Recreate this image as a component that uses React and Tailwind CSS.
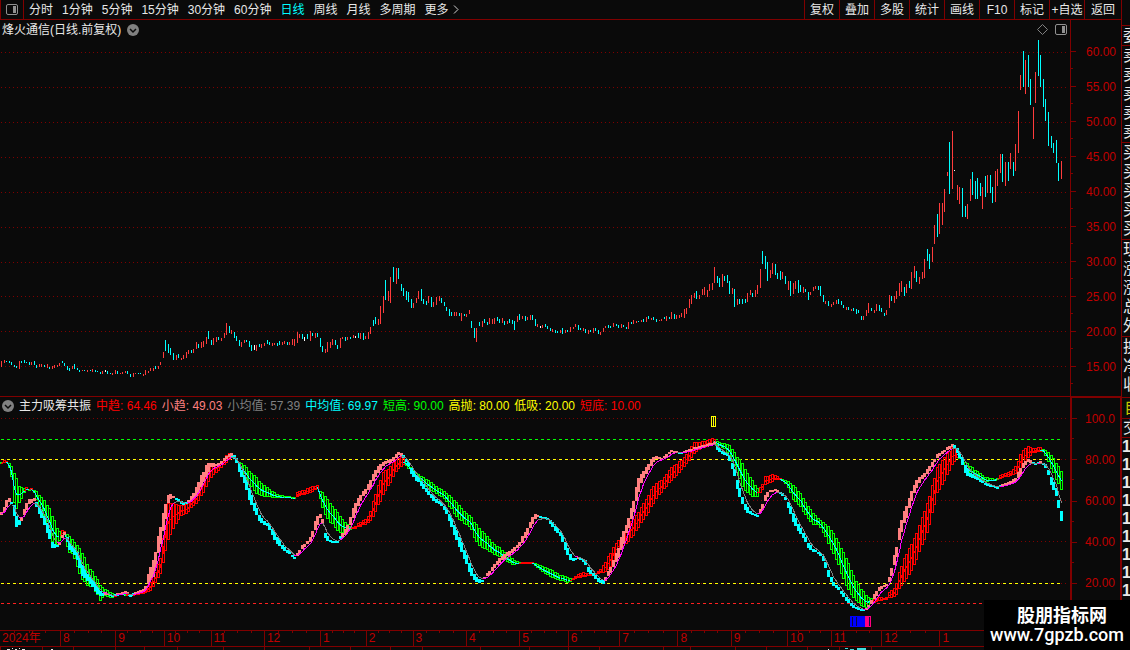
import React from 'react'

const STEP = 2.529

// each bar: colour letter (r up, c down, w flat), then top-bottom
const PRICE_BARS = [
  {
    from: 0,
    bars: `r361-367 r360-363 c361-362 c361-363 c362-365 c365-367 c366-368 r361-369 c361-363 c360-363
      c362-363 c362-365 r362-365 c361-365 c365-368 r364-367 r364-367 c365-367 r364-368 c367-369
      r366-369 r365-368 r365-367 r363-366 c361-363 c363-366 c366-370 c368-371 r366-369 c364-369
      c368-370 c370-372 r370-371 c370-371 r370-372 c370-371 r369-372 c370-372 c371-372 c372-374
      r371-374 w370-372 c371-374 c373-374 r373-375 r370-374 c371-374 r373-374 r372-374 r371-373
      c371-374 c374-377 r373-377 r373-374 c373-374 c373-374 r374-376 r370-375 r371-373 r368-371
      r368-371 c366-369 r366-369 r362-365 r352-358 c340-351 c344-353 c348-355 c353-360 r355-360
      c354-358 r358-360 r355-359 r352-358 r350-354 c350-353 r349-353 r342-349 c344-348 r342-348
      r341-347 r337-344 c331-339 c340-345 r338-345 r337-342 c337-340 r338-341 r333-338 r323-335
      c326-333 r330-334 c332-338 c336-341 c340-346 r342-347 r340-343 c340-342 c341-347 c345-351
      w345-350 r345-351 c344-347 r344-348 r343-346 c340-344 c342-345 r343-346 r343-345 c343-346
      c341-345 r342-345 r341-344 c342-345 r342-345 r339-345 r339-346 r332-343 r334-338 c334-339
      w337-341 c334-339 r331-341 c333-336 r333-338 c333-337 c338-347 c346-352 r349-353 r342-352
      r342-348 r339-345 c340-345 c345-349 r338-348 r337-339 c337-341 r337-340 c337-339 r335-338
      w336-338 c333-338 r333-339 c333-340 r336-339 r332-339 r327-334 c320-326 c317-324 r319-325`,
  },
  {
    from: 150,
    bars: `r306-324 r296-313 c280-300 r291-301 r277-303 c267-282 r268-284 c268-279 c284-291 c288-296
      c291-300 c292-302 c299-308 r303-308 r298-303 r291-299 c289-301 c299-304 c301-305 r296-303
      c297-307 r302-307 r297-305 r296-301 c298-303 c302-306 c307-311 c309-316 c312-316 r312-316
      r312-316 c313-316 r313-321 c314-316 r314-317 r310-314 c321-328 c328-338 r328-342 c322-326
      r321-327 c319-323 c322-325 r318-324 r319-324 r318-324 c317-321 c319-323 r318-323 c321-325
      r321-324 c319-323 c320-324 c321-330 r316-322 c314-320 r316-319 c316-321 r317-320 r315-320
      c315-320 c319-326 r324-327 w326-328 r325-328 c324-327 c326-329 c328-331 r329-332 c330-333
      c331-333 r330-333 c328-334 r330-333 c330-332 r327-332 r327-329 r324-327 c325-330 c328-330
      r328-331 c329-333 r330-334 c330-332 r328-333 c328-331 c330-334 r332-335 r328-332 r326-328
      c325-328 c326-328 r323-327 c324-326 c325-328 r324-328 c325-327 c327-329 r322-329 c322-324
      r320-324 r321-323 c321-322 r320-322 c319-322 r317-322 c316-319 r318-320 c317-320 c319-322
      r320-321 r319-321 c317-319 r316-321 c317-319 r312-319 c314-319 r315-319 r315-318 r313-317
      r309-318 r308-314 r299-308 r295-304 r293-298 c291-299 r295-299 r289-295 r287-295 r290-297
      r284-291 r283-290 r267-283 c276-283 c278-287`,
  },
  {
    from: 285,
    bars: `r274-287 c276-281 c275-283 c281-294 r288-294 c289-307 r299-305 c299-304 c299-304 c299-303
      r293-302 r290-295 c293-297 r290-297 r285-294 r269-288 c251-264 c256-269 c262-281 r270-278
      r263-274 c264-275 c273-279 c271-280 r272-279 c276-284 r281-290 c281-296 r283-294 r281-289
      c280-293 c285-292 r287-293 c289-292 c292-300 r292-295 r287-291 r286-289 c286-290 c286-296
      c295-302 r301-304 c301-306 r304-307 r302-305 r300-304 c299-304 c301-305 c305-308 r307-310
      c307-310 r309-311 c308-311 c309-314 c310-313 c316-320 r316-320 r310-316 r303-313 c308-311
      r310-313 r304-311 c305-311 c308-312 c313-316 r310-315 r295-308 c296-301 r296-303 r291-299
      r283-296 r281-292 c287-296 r284-293 c281-288 r272-289 r266-278 c271-282 r277-284 r272-279
      r259-278 c249-261 c254-269 r247-262`,
  },
  {
    from: 369,
    bars: `r225-244 c214-237 r203-234 r203-225 r189-212 r172-176 c142-194 r131-189 w170-171 r185-200
      r187-204 c188-217 c206-217 r204-219 r179-201 c172-195 c181-199 c178-199 c183-196 r187-209
      c176-197 r175-193 c175-193 c187-203 r171-202 r169-186 r154-173 c154-182 r162-186 c162-181
      r153-169 c162-176 r144-171 r111-153 r75-90 c51-87 r60-94 c55-87 c79-105 r107-139
      r72-103 c40-76 c55-87 c79-107 c99-121 c112-146 c136-148 c143-153 c140-163 c163-181 r161-179`,
  },
]

// colour letter + x:top-bottom, values between two points are interpolated
const MID_TREND = `c0:463-464 r4:460-463 r7:461-462 g9:463-468 g12:467-482 g14:473-503 g17:481-512 g19:486-503
  g22:488-497 g24:488-493 r26:487-490 g29:489-490 r31:488-490 g34:490-493 g37:492-503 g40:496-508 g43:498-515
  g46:503-525 g49:508-533 g52:516-542 g55:522-546 g58:531-545 g60:531-537 r63:529-535 g65:533-535 g68:535-553
  g72:539-554 g76:544-563 g80:549-577 g84:557-582 g88:566-587 g92:571-587 g96:577-593 g100:585-601 g104:588-595
  g108:590-598 g112:593-598 r116:594-596 g122:593-595 r128:594-596 g131:594-596 r136:593-595 r142:590-594
  r147:586-593 r151:580-590 r155:572-583 r158:564-578 r161:555-572 r163:538-563 r166:503-545 r169:503-537
  r172:503-530 r176:504-524 r180:505-516 r184:505-515 r188:503-512 r192:498-507 r196:493-504 r200:482-497
  r204:472-492 r208:463-482 r212:463-476 r217:464-472 r222:461-467 r227:453-462 r231:453-458 g234:457-459
  g238:461-465 g242:463-473 g247:468-482 g251:473-487 g256:477-494 g261:483-496 g267:487-497 g273:492-498
  g280:495-498 g287:496-498 g294:497-499 r297:492-497 r303:490-495 r310:487-493 r317:485-489 g319:490-493
  g321:491-505 g324:495-513 g328:500-521 g333:507-525 g338:513-533 g342:519-533 g346:523-532 g350:526-530
  r354:527-529 r359:522-527 r364:520-525 r367:518-524 r371:508-520 r374:497-515 r377:487-507 r381:477-500
  r384:470-493 r387:470-487 r391:465-482 r394:460-475 r397:458-470 r401:457-467 r404:458-464 g407:462-467
  g410:466-473 g415:473-477 g422:476-482 g428:480-489 g435:485-493 g443:490-498 g450:496-508 g457:503-518
  g463:510-523 g470:516-528 g475:523-540 g480:529-548 g485:534-549 g493:543-554 g500:548-558 g507:555-562
  g513:559-565 g518:562-564 r523:562-563 r533:562-563 g536:563-567 g542:566-572 g550:569-577 g558:574-580
  g567:577-583 g570:578-582 r573:578-580 r577:574-578 r583:572-577 r590:574-576 r597:572-574 r602:567-573
  r607:558-572 r612:549-563 r617:541-553 r622:536-547 r627:527-543 r632:520-537 r637:514-530 r642:505-521
  r647:497-515 r652:487-505 r657:482-498 r663:479-490 r670:468-482 r677:463-475 r683:458-468 r688:452-462
  r693:442-455 r700:442-449 r707:440-447 r713:438-443 g718:442-445 g725:443-450 g730:446-458 g732:449-462
  g737:457-473 g742:463-487 g747:473-493 g752:480-497 g757:488-497 r761:486-492 r765:476-485 r773:474-481
  r779:477-479 g783:479-482 g788:481-488 g793:485-500 g800:493-507 g807:505-518 g812:512-525 g818:518-525
  g823:522-533 g830:528-548 g837:540-562 g842:550-577 g847:560-588 g852:573-597 g857:583-602 g862:590-607
  g866:595-608 g870:598-604 r873:599-603 r878:597-601 r885:598-600 r889:592-598 r895:587-597 r898:575-590
  r903:560-583 r908:550-577 r913:540-567 r917:530-557 r922:517-545 r927:503-533 r932:485-513 r937:467-493
  r942:460-485 r947:453-475 r952:447-465 r957:449-458 g960:453-460 g965:462-473 g972:467-476 g978:472-478
  g985:477-482 g992:478-481 g996:479-480 r999:475-479 r1005:473-477 r1012:470-476 r1017:464-473 r1021:451-467
  r1028:446-458 r1033:448-453 r1040:447-452 g1043:449-452 g1047:451-460 g1050:453-467 g1053:458-473
  g1057:465-482 g1062:472-492`

const SMALL_TREND = `p0:514-516 p4:507-512 p6:500-507 p9:498-502 c11:502-504 c14:505-516 c16:516-527 c19:520-525
  p22:516-519 p25:505-513 p27:500-507 p30:499-503 p34:498-501 c36:502-507 c40:508-516 c44:516-525 c47:523-533
  c50:532-542 c52:542-548 c56:546-548 p59:542-545 p61:537-540 p64:532-535 c66:534-538 c69:543-550 c73:547-553
  c77:552-560 c81:563-575 c85:572-579 c89:575-583 c94:583-590 c98:588-595 c102:593-596 p106:592-594 c110:594-596
  c113:595-597 p118:593-594 p126:591-593 c130:594-597 p137:591-593 p143:589-591 p146:585-590 p149:569-581
  p153:560-577 p156:548-562 p158:536-553 p161:522-540 p164:508-527 p166:499-510 p169:493-500 p172:495-497
  c175:497-499 c180:500-503 c184:503-505 p188:500-503 p192:495-500 p195:490-498 p198:482-493 p201:475-487
  p204:470-480 p207:463-475 p210:463-467 p217:464-466 p222:460-463 p227:455-458 p231:453-456 c234:455-459
  c237:460-465 c240:468-475 c244:475-483 c248:485-497 c251:495-505 c255:505-513 c258:513-520 c262:519-524
  c267:523-526 c271:527-533 c275:533-542 c280:542-547 c284:547-551 c290:552-555 c294:557-559 p298:551-555
  p302:545-549 p306:542-544 p310:537-542 p313:528-535 p316:518-528 p319:512-518 p321:516-518 c323:522-528
  c325:533-538 c328:538-543 c331:541-542 c337:541-543 p342:533-537 p346:527-534 p350:517-525 p354:505-516
  p357:499-508 p361:493-498 p365:489-494 p370:480-488 p375:470-477 p380:464-470 p385:461-464 p390:459-463
  p394:456-460 p398:452-455 p401:453-456 c404:456-459 c407:460-463 c410:466-472 c414:472-479 c419:479-483
  c424:485-490 c429:492-496 c434:497-502 c440:502-504 c445:507-512 c449:514-521 c453:522-532 c457:532-542
  c461:542-552 c465:552-561 c469:563-572 c473:572-579 c477:578-583 c482:580-582 p485:575-578 p490:570-574
  p495:563-567 p500:557-562 p506:553-557 p512:549-553 p517:545-548 p521:538-544 p526:530-537 p530:522-528
  p533:515-522 p536:514-517 c540:516-518 c547:518-520 c552:522-527 c556:527-532 c560:532-536 c563:537-545
  c566:545-553 c569:553-559 c573:558-561 p577:557-558 c581:558-559 c585:560-565 c588:567-572 c592:572-575
  c597:577-581 c602:582-585 p606:575-579 p610:567-573 p614:558-565 p618:548-558 p622:533-547 p626:525-533
  p629:515-525 p632:505-516 p635:492-505 p638:478-492 p642:473-480 p647:465-472 p652:458-464 p655:456-459
  p662:458-459 p667:453-456 p671:450-452 p677:451-452 c680:452-453 p684:451-453 p690:449-451 p695:447-449
  p703:445-447 p710:443-445 p714:442-444 c717:445-450 c721:450-453 c727:453-456 c730:458-463 c733:465-472
  c737:480-489 c739:488-497 c743:500-506 c747:507-513 c752:513-515 c757:515-517 p761:507-512 p763:500-505
  p766:492-499 p770:490-492 p775:489-491 c779:491-493 c784:495-498 c787:500-505 c791:508-517 c795:518-526
  c799:526-532 c803:533-538 c808:543-548 c813:549-552 c818:552-553 c822:553-558 c825:562-568 c828:570-577
  c833:582-586 c838:587-590 c843:593-597 c848:599-603 c853:605-608 c858:608-609 c864:609-611 p867:607-608
  p870:602-606 p874:594-599 p878:588-592 p883:585-587 p887:584-585 p890:573-580 p892:562-572 p895:552-562
  p897:542-552 p899:528-540 p902:516-528 p905:508-520 p908:503-513 p910:493-503 p914:485-493 p917:478-485
  p922:475-479 p927:469-474 p932:462-467 p935:457-460 p938:453-457 p943:451-453 p948:446-449 p952:444-447
  c955:445-450 c958:450-455 c962:457-465 c966:467-475 c970:473-477 c977:477-480 c982:481-483 c986:483-486
  c992:485-487 c997:487-488 p1002:484-486 p1008:482-485 p1015:478-482 p1019:470-477 p1023:463-468 p1027:458-462
  c1032:462-463 c1037:463-464 p1040:461-463 c1044:463-466 c1047:467-472 c1049:472-478 c1052:480-488
  c1056:488-496 c1059:506-514 c1062:514-524`

const COLORS = { r: '#ff3c3c', c: '#00ffff', w: '#ffffff' }

const candles = PRICE_BARS.flatMap(({ from, bars }) =>
  bars.trim().split(/\s+/).map((bar, i) => {
    const [top, bottom] = bar.slice(1).split('-').map(Number)
    return { x: Math.floor(1.5 + STEP * (from + i)), top, bottom, color: COLORS[bar[0]] }
  })
)

const expand = (text) => {
  const points = text.trim().split(/\s+/).map((item) => {
    const [x, range] = item.slice(1).split(':')
    const [top, bottom] = range.split('-').map(Number)
    return { kind: item[0], x: Number(x), top, bottom }
  })
  const out = []
  let k = 0
  for (let i = 0; i < 420; i++) {
    const x = Math.floor(1.5 + STEP * i)
    while (k < points.length - 2 && points[k + 1].x <= x) k++
    const a = points[k]
    const b = points[k + 1]
    const t = Math.min(1, (x - a.x) / (b.x - a.x))
    out.push({
      x,
      kind: t > 0.6 ? b.kind : a.kind,
      top: Math.round(a.top + (b.top - a.top) * t),
      bottom: Math.round(a.bottom + (b.bottom - a.bottom) * t),
    })
  }
  return out
}

const midBars = expand(MID_TREND)
const smallBars = expand(SMALL_TREND)

const midLine = midBars.map((b) => ({ x: b.x, y: (b.top + b.bottom) / 2, color: b.kind === 'r' ? '#ff0000' : '#00ffff' }))

let last = null
const smallLine = smallBars.map((b) => {
  const mid = (b.top + b.bottom) / 2
  last = last === null ? mid : last + (mid - last) * 0.42
  return { x: b.x, y: last, color: b.kind === 'p' ? '#ff00ff' : '#808080' }
})

const PERIODS = ['分时', '1分钟', '5分钟', '15分钟', '30分钟', '60分钟', '日线', '周线', '月线', '多周期']
const ACTIONS = ['复权', '叠加', '多股', '统计', '画线', 'F10', '标记', '+自选', '返回']
const PRICES = ['60.00', '55.00', '50.00', '45.00', '40.00', '35.00', '30.00', '25.00', '20.00', '15.00']
const LEVELS = ['100.0', '80.00', '60.00', '40.00', '20.00']

const LEGEND = [
  { label: '中趋', value: '64.46', color: 'text-[#ff0000]' },
  { label: '小趋', value: '49.03', color: 'text-[#ff8080]' },
  { label: '小均值', value: '57.39', color: 'text-[#808080]' },
  { label: '中均值', value: '69.97', color: 'text-[#00ffff]' },
  { label: '短高', value: '90.00', color: 'text-[#00ff00]' },
  { label: '高抛', value: '80.00', color: 'text-[#ffff00]' },
  { label: '低吸', value: '20.00', color: 'text-[#ffff00]' },
  { label: '短底', value: '10.00', color: 'text-[#ff0000]' },
]

const MONTHS = [
  ['2024年', 61], ['8', 55], ['9', 48], ['10', 46], ['11', 53], ['12', 56], ['1', 45], ['2', 46], ['3', 53], ['4', 53],
  ['5', 48], ['6', 51], ['7', 58], ['8', 53], ['9', 56], ['10', 43], ['11', 50], ['12', 58], ['1', 188],
]

const QUOTE_GROUPS = [
  ['委'],
  ['卖', '卖', '卖', '卖', '卖'],
  ['买', '买', '买', '买', '买'],
  ['现', '涨', '涨', '总', '外'],
  ['换', '净', '收'],
]

const ChevronBadge = () => (
  <svg width="12" height="12" viewBox="0 0 12 12">
    <circle cx="6" cy="6" r="6" fill="#808080" />
    <path d="M3 5l3 3 3-3" fill="none" stroke="#0a0a0a" strokeWidth="1.5" />
  </svg>
)

const PanelIcon = () => (
  <svg width="12" height="11" viewBox="0 0 12 11">
    <rect x="0.5" y="0.5" width="11" height="10" rx="1.5" fill="none" stroke="#909090" />
    <rect x="7" y="2" width="3" height="7" fill="#909090" />
  </svg>
)

const TopBar = () => (
  <header className="flex h-5 shrink-0 items-stretch justify-between border-b border-[#800000] text-xs text-[#e8e8e8]">
    <nav className="flex items-center gap-[9px] whitespace-nowrap">
      <button aria-label="切换面板" className="-mr-1 flex w-6 items-center justify-center self-stretch border-x border-[#800000]">
        <PanelIcon />
      </button>
      {PERIODS.map((name) => (
        <button key={name} className={name === '日线' ? 'text-[#00ffff]' : ''}>{name}</button>
      ))}
      <button className="flex items-center gap-1">
        更多
        <svg width="6" height="9" viewBox="0 0 6 9" fill="none" stroke="#d0d0d0"><path d="M1 0.5l4 4-4 4" /></svg>
      </button>
    </nav>
    <div className="flex whitespace-nowrap">
      {ACTIONS.map((name) => (
        <button key={name} className="w-[35px] border-l border-[#800000] last:w-[37px]">{name}</button>
      ))}
    </div>
  </header>
)

const AxisRows = ({ labels }) => labels.map((label) => (
  <div key={label} className="flex flex-1 flex-col">
    <div className="flex flex-1 items-center">
      <span className="h-px w-[5px] bg-[#800000]" />
      <span className="flex-1 pr-[5px] text-right leading-none">{label}</span>
    </div>
    <span className="-mt-px h-px w-0.5 bg-[#800000]" />
  </div>
))

const GridLine = ({ y }) => (
  <line x1="1" x2="1066" y1={y + 0.5} y2={y + 0.5} stroke="#800000" strokeDasharray="1 3" />
)

const PriceChart = () => (
  <svg viewBox="0 39 1070 357" preserveAspectRatio="none" shapeRendering="crispEdges" className="min-h-0 w-full flex-1">
    {[52, 87, 122, 157, 192, 227, 262, 296, 331, 366].map((y) => <GridLine key={y} y={y} />)}
    {candles.map((c) => (
      <rect key={c.x} x={c.x} y={c.top} width="1" height={c.bottom - c.top} fill={c.color} />
    ))}
  </svg>
)

const Segments = ({ points }) => points.slice(1).map((p, i) => (
  <line key={p.x} x1={points[i].x + 0.5} y1={points[i].y + 0.5} x2={p.x + 0.5} y2={p.y + 0.5} stroke={p.color} />
))

const TrendChart = () => (
  <svg viewBox="0 414 1070 216" preserveAspectRatio="none" shapeRendering="crispEdges" className="min-h-0 w-full flex-1">
    {[418, 459, 500, 541, 583].map((y) => <GridLine key={y} y={y} />)}
    {[[439, '#00ff00'], [459, '#ffff00'], [583, '#ffff00'], [603, '#ff2020']].map(([y, color]) => (
      <line key={y} x1="1" x2="1061" y1={y + 0.5} y2={y + 0.5} stroke={color} strokeDasharray="3 3" />
    ))}
    {midBars.map((b) => (
      <rect
        key={b.x}
        x={b.x - 0.5}
        y={b.top + 0.5}
        width="2"
        height={Math.max(1, b.bottom - b.top - 1)}
        fill="none"
        stroke={b.kind === 'r' ? '#ff0000' : '#00ff00'}
      />
    ))}
    <Segments points={midLine} />
    {smallBars.map((b) => (
      <rect key={b.x} x={b.x - 1} y={b.top} width="3" height={Math.max(2, b.bottom - b.top)} fill={b.kind === 'p' ? '#ff8080' : '#00ffff'} />
    ))}
    <Segments points={smallLine} />
    <path d="M711.5 416.5h4v10h-4zM713.5 416v11" fill="none" stroke="#ffff00" />
    <rect x="850" y="616" width="15" height="11" fill="#0000ff" />
    <rect x="865" y="616" width="6" height="11" fill="#ff0080" />
    <path d="M852.5 617v9M856.5 617v9M869.5 617v9" stroke="#0a0a40" />
  </svg>
)

const TimeAxis = () => (
  <div className="flex h-[17px] shrink-0 border-y border-[#800000] text-xs text-[#c00000]">
    {MONTHS.map(([label, width], i) => (
      <div key={i} className="relative min-w-0 basis-0 border-l border-[#800000] pl-0.5 leading-[15px] first:border-l-0" style={{ flexGrow: width }}>
        {label}
        <div className="absolute inset-x-0 top-0 flex h-0.5">
          <span className="flex-1" />
          <span className="flex-1 border-l border-[#800000]" />
          <span className="flex-1 border-l border-[#800000]" />
          <span className="flex-1 border-l border-[#800000]" />
        </div>
      </div>
    ))}
  </div>
)

const FooterStrip = () => (
  <svg viewBox="0 0 1121 3" preserveAspectRatio="none" shapeRendering="crispEdges" className="h-[3px] w-full shrink-0">
    {[0, 42, 73, 115, 144, 177, 223, 264, 309, 350, 390, 422, 480, 529, 568, 599, 663, 690, 735, 766, 807, 839, 871].map((x) => (
      <rect key={x} x={x} y="0" width="1" height="3" fill="#800000" />
    ))}
    <path d="M7 2.5h3M12 1.5h1M15 2.5h2M19 1.5h1M22 2.5h3M51 2.5h2M828 2.5h1" stroke="#e8e8e8" />
    <path d="M845 1.5h3M850 2.5h4M857 1.5h9M857 2.5h9" stroke="#40e0e0" />
  </svg>
)

const QuoteStrip = () => (
  <aside className="w-[9px] shrink-0 overflow-hidden border-l border-[#800000] pt-[25px] text-base text-[#e8e8e8]">
    {QUOTE_GROUPS.map((group, i) => (
      <div key={i} className="border-t border-[#800000] pl-px">
        {group.map((text, j) => (
          <div key={j} className="h-[19px] w-4 leading-[19px]">{text}</div>
        ))}
        {group.length === 3 && <div className="h-[3px]" />}
        {group.length === 5 && <div className="h-px" />}
      </div>
    ))}
    <div className="border-y border-[#800000] pl-0.5">
      <div className="h-5 w-4 leading-5 text-[#c8c800]">自</div>
    </div>
    <div className="border-b border-[#800000] pl-px">
      <div className="h-[18px] w-4 leading-[18px]">交</div>
    </div>
    {[1, 2, 3, 4, 5, 6, 7, 8, 9].map((n) => (
      <div key={n} className="h-[18px] text-base font-bold leading-[18px]">1</div>
    ))}
  </aside>
)

const App = () => {
  return (
    <div className="relative flex h-screen overflow-hidden bg-[#0a0a0a] font-['Liberation_Sans','Noto_Sans_CJK_SC',sans-serif]">
      <main className="flex min-w-0 flex-1 flex-col">
        <TopBar />

        <section className="flex min-h-0 flex-[376]">
          <div className="flex min-w-0 flex-1 flex-col">
            <div className="flex h-[19px] shrink-0 items-center justify-between pl-0.5 pr-[3px] text-xs text-[#e8e8e8]">
              <h1 className="flex items-center gap-1.5">
                烽火通信(日线.前复权)
                <button aria-label="选择"><ChevronBadge /></button>
              </h1>
              <div className="flex items-center gap-[7px]">
                <svg width="11" height="11" viewBox="0 0 11 11" fill="none" stroke="#808080"><path d="M5.5 0.5l5 5-5 5-5-5z" /></svg>
                <PanelIcon />
              </div>
            </div>
            <PriceChart />
          </div>
          <div className="flex w-[51px] shrink-0 flex-col border-l border-[#800000] pb-3 pt-3.5 text-xs text-[#c00000]">
            <AxisRows labels={PRICES} />
          </div>
        </section>

        <section className="flex min-h-0 flex-[234]">
          <div className="flex min-w-0 flex-1 flex-col border-t border-[#800000]">
            <div className="flex h-[17px] shrink-0 items-center gap-[5px] whitespace-nowrap pl-0.5 text-xs">
              <button aria-label="指标选择"><ChevronBadge /></button>
              <h2 className="text-[#e8e8e8]">主力吸筹共振</h2>
              {LEGEND.map((item) => (
                <span key={item.label} className={item.color}>{item.label}: {item.value}</span>
              ))}
            </div>
            <TrendChart />
          </div>
          <div className="flex w-[51px] shrink-0 flex-col border-l-2 border-r border-t-2 border-[#800000] pb-[26px] text-xs text-[#c00000]">
            <AxisRows labels={LEVELS} />
          </div>
        </section>

        <TimeAxis />
        <FooterStrip />
      </main>
      <QuoteStrip />

      <div className="absolute bottom-0 right-0 flex h-[50px] w-[146px] flex-col items-center justify-center bg-black text-white">
        <div className="pl-2.5 text-lg font-bold leading-5">股朋指标网</div>
        <div className="font-['Roboto',sans-serif] text-lg font-medium leading-[18px]">www.7gpzb.com</div>
      </div>
    </div>
  )
}

export default App
